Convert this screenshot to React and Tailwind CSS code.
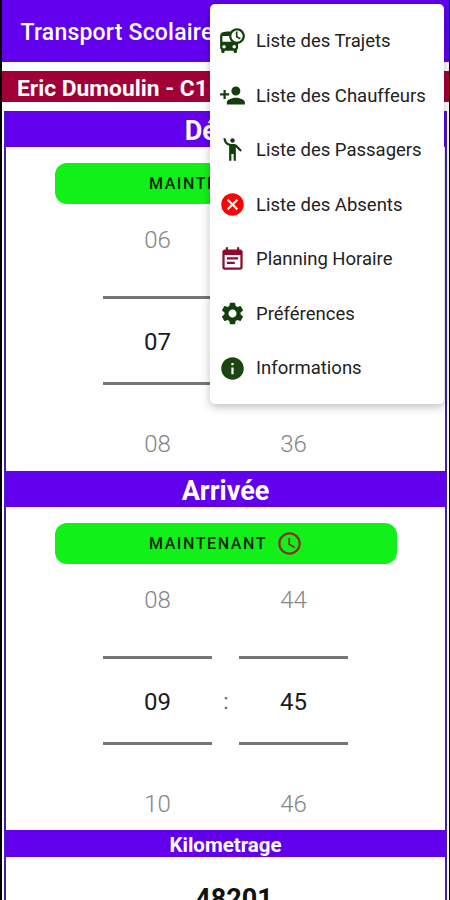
import React from "react";
import {
  MdAccessTime,
  MdCancel,
  MdDepartureBoard,
  MdEmojiPeople,
  MdEventNote,
  MdInfo,
  MdPersonAdd,
  MdSettings,
} from "react-icons/md";

const menuItems = [
  { label: "Liste des Trajets", icon: MdDepartureBoard, color: "text-[#123f0c]" },
  { label: "Liste des Chauffeurs", icon: MdPersonAdd, color: "text-[#123f0c]" },
  { label: "Liste des Passagers", icon: MdEmojiPeople, color: "text-[#123f0c]" },
  { label: "Liste des Absents", icon: MdCancel, color: "text-[#fb0007]" },
  { label: "Planning Horaire", icon: MdEventNote, color: "text-[#8f0a2c]" },
  { label: "Préférences", icon: MdSettings, color: "text-[#123f0c]" },
  { label: "Informations", icon: MdInfo, color: "text-[#1b4512]" },
];

function NumberWheel({ values }) {
  const [previous, current, next] = values;
  return (
    <div className="w-[109px] text-center text-[24px] leading-[30px] text-[#858585]">
      <div className="h-[74px] pt-[3px] font-light">{previous}</div>
      <div className="h-[89px] border-y-3 border-[#757575] pt-[28px] text-[#1c1c1c]">
        {current}
      </div>
      <div className="h-[86px] pt-[44px] font-light">{next}</div>
    </div>
  );
}

function TimeSection({ title, hours, minutes }) {
  return (
    <section className="h-[359.5px]">
      <h2 className="h-[36px] bg-[#6200ee] text-center text-[27px] leading-[41px] font-bold text-white">
        {title}
      </h2>
      <button className="mx-auto mt-[16px] flex h-[41px] w-[342px] items-center justify-center gap-[9px] rounded-xl bg-[#12f01a] pl-px text-[16px] font-medium tracking-[1.6px] text-[#10260f]">
        <span className="pt-px">MAINTENANT</span>
        <MdAccessTime className="size-[27px] text-[#8c2a12]" />
      </button>
      <div className="mt-[18px] flex justify-center">
        <NumberWheel values={hours} />
        <div className="w-[27px] pt-[106px] pl-px text-center text-[22px] leading-[28px] text-[#666]">
          :
        </div>
        <NumberWheel values={minutes} />
      </div>
    </section>
  );
}

function OverflowMenu() {
  return (
    <ul className="absolute top-[4px] left-[210px] h-[400px] w-[234px] rounded-[5px] bg-white pt-[9.5px] shadow-[0_3px_8px_rgba(0,0,0,0.25)]">
      {menuItems.map(({ label, icon: Icon, color }) => (
        <li key={label} className="flex h-[54.6px] items-center gap-[10px] pl-[9px]">
          <Icon className={`size-[27px] shrink-0 ${color}`} />
          <span className="pt-[2px] text-[18.5px] whitespace-nowrap text-[#222]">
            {label}
          </span>
        </li>
      ))}
    </ul>
  );
}

function App() {
  return (
    <div className="relative h-[900px] w-[450px] overflow-hidden bg-black pr-px pl-[2px] font-['Roboto',sans-serif]">
      <div className="flex h-full flex-col bg-white">
        <header className="h-[62px] shrink-0 bg-[#6200ee] pt-[17px] pl-[18.5px] text-[23px] leading-[31px] font-medium tracking-[0.2px] text-white">
          Transport Scolaire
        </header>
        <div className="mt-[9px] h-[31px] shrink-0 bg-[#a00036] pl-[15px] text-[22.8px] leading-[35px] font-bold text-white">
          Eric Dumoulin - C1
        </div>
        <main className="mx-[2px] mt-[9px] h-[800px] shrink-0 border-x-2 border-[#3d20bb]">
          <TimeSection
            title="Départ"
            hours={["06", "07", "08"]}
            minutes={["34", "35", "36"]}
          />
          <TimeSection
            title="Arrivée"
            hours={["08", "09", "10"]}
            minutes={["44", "45", "46"]}
          />
          <h2 className="h-[26.5px] bg-[#6200ee] text-center text-[20.5px] leading-[30px] font-bold text-white">
            Kilometrage
          </h2>
          <p className="mt-[25px] pl-[17px] text-center text-[27px] leading-[34px] font-bold text-[#111]">
            48201
          </p>
        </main>
      </div>
      <OverflowMenu />
    </div>
  );
}

export default App;
